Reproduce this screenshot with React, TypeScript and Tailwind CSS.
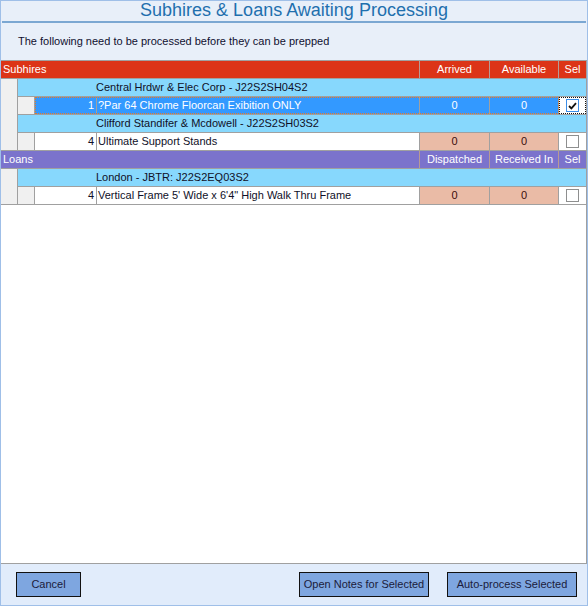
import React from "react";

type Item = {
  qty: number;
  name: string;
  a: number;
  b: number;
  checked: boolean;
  selected?: boolean;
};

type Group = { title: string; items: Item[] };

type Section = {
  label: string;
  cols: [string, string, string];
  headerBg: string;
  groups: Group[];
};

const sections: Section[] = [
  {
    label: "Subhires",
    cols: ["Arrived", "Available", "Sel"],
    headerBg: "bg-[#dc3417]",
    groups: [
      {
        title: "Central Hrdwr & Elec Corp - J22S2SH04S2",
        items: [
          { qty: 1, name: "?Par 64 Chrome Floorcan Exibition ONLY", a: 0, b: 0, checked: true, selected: true },
        ],
      },
      {
        title: "Clifford Standifer & Mcdowell - J22S2SH03S2",
        items: [{ qty: 4, name: "Ultimate Support Stands", a: 0, b: 0, checked: false }],
      },
    ],
  },
  {
    label: "Loans",
    cols: ["Dispatched", "Received In", "Sel"],
    headerBg: "bg-[#7b73cc]",
    groups: [
      {
        title: "London - JBTR: J22S2EQ03S2",
        items: [
          { qty: 4, name: "Vertical Frame 5' Wide x 6'4\" High Walk Thru Frame", a: 0, b: 0, checked: false },
        ],
      },
    ],
  },
];

function CheckBox({ checked }: { checked: boolean }) {
  return (
    <span
      className={`flex h-[13px] w-[13px] items-center justify-center bg-white border ${
        checked ? "border-[#3c8ee8]" : "border-[#8e8f8f]"
      }`}
    >
      {checked && (
        <svg width="9" height="8" viewBox="0 0 9 8">
          <path d="M1 4 L3.4 6.4 L8 1.2" fill="none" stroke="#111" strokeWidth="1.8" />
        </svg>
      )}
    </span>
  );
}

function ItemRow({ item }: { item: Item }) {
  const sel = item.selected;
  const cell = sel ? "bg-[#3399ff] text-white" : "bg-white text-[#101028]";
  const num = sel ? "bg-[#3399ff] text-white" : "bg-[#eabba6] text-[#3a0e0e]";
  return (
    <div className="flex h-[18px] border-b border-[#a0a0a0]">
      <div className="w-[17px] shrink-0 border-r border-[#a0a0a0] bg-[#f0f0f0]" />
      <div
        className={`flex ${sel ? "outline-1 outline-dotted outline-[#e07a2a] -outline-offset-1" : ""}`}
      >
        <div className={`flex w-[62px] items-center justify-end border-r border-[#a0a0a0] pr-[2px] ${cell}`}>
          {item.qty}
        </div>
        <div className={`flex w-[323px] items-center border-r border-[#a0a0a0] pl-[1px] ${cell}`}>
          {item.name}
        </div>
        <div className={`flex w-[70px] items-center justify-center border-r border-[#a0a0a0] ${num}`}>
          {item.a}
        </div>
        <div className={`flex w-[69px] items-center justify-center border-r border-[#a0a0a0] ${num}`}>
          {item.b}
        </div>
      </div>
      <div
        className={`flex flex-1 items-center justify-center bg-white ${
          sel ? "outline-1 outline-dotted outline-[#111] -outline-offset-1" : ""
        }`}
      >
        <CheckBox checked={item.checked} />
      </div>
    </div>
  );
}

function SectionBlock({ section }: { section: Section }) {
  return (
    <div>
      <div className={`flex h-[18px] border-b border-[#a0a0a0] text-white ${section.headerBg}`}>
        <div className="flex w-[419px] items-center border-r border-[#b89a94] pl-[2px]">{section.label}</div>
        <div className="flex w-[70px] items-center justify-center border-r border-[#b89a94]">{section.cols[0]}</div>
        <div className="flex w-[69px] items-center justify-center border-r border-[#b89a94]">{section.cols[1]}</div>
        <div className="flex flex-1 items-center justify-center">{section.cols[2]}</div>
      </div>
      <div className="flex">
        <div className="w-[17px] shrink-0 border-r border-b border-[#a0a0a0] bg-[#f0f0f0]" />
        <div className="flex-1">
          {section.groups.map((g) => (
            <div key={g.title}>
              <div className="flex h-[18px] items-center border-b border-[#a0a0a0] bg-[#87d8fd] pl-[78px] text-[#101028]">
                {g.title}
              </div>
              {g.items.map((it) => (
                <ItemRow key={it.name} item={it} />
              ))}
            </div>
          ))}
        </div>
      </div>
    </div>
  );
}

export default function App() {
  return (
    <div className="flex h-[606px] w-[588px] flex-col border border-[#9fbfe8] bg-[#e8eff9] font-['Liberation_Sans',Arial,sans-serif] text-[11px]">
      <div className="h-[20px] text-center text-[18px] leading-[18px] text-[#1f6fae]">
        Subhires &amp; Loans Awaiting Processing
      </div>
      <div className="mx-[1px] h-[2px] bg-[#7ba7d2]" />
      <div className="flex h-[37px] items-center pl-[17px] text-[#101030]">
        The following need to be processed before they can be prepped
      </div>
      <div className="flex-1 border-y border-r border-[#a0a0a0] bg-white">
        {sections.map((s) => (
          <SectionBlock key={s.label} section={s} />
        ))}
      </div>
      <div className="flex h-[41px] items-start justify-between bg-[#e1ecfb] pt-[8px] pl-[15px] pr-[10px]">
        <button className="h-[25px] w-[65px] border border-[#111] bg-[#7ea6e0] text-[#1b1b3b]">Cancel</button>
        <div className="flex gap-[18px]">
          <button className="h-[25px] w-[130px] border border-[#111] bg-[#7ea6e0] text-[#1b1b3b]">
            Open Notes for Selected
          </button>
          <button className="h-[25px] w-[130px] border border-[#111] bg-[#7ea6e0] text-[#1b1b3b]">
            Auto-process Selected
          </button>
        </div>
      </div>
    </div>
  );
}
